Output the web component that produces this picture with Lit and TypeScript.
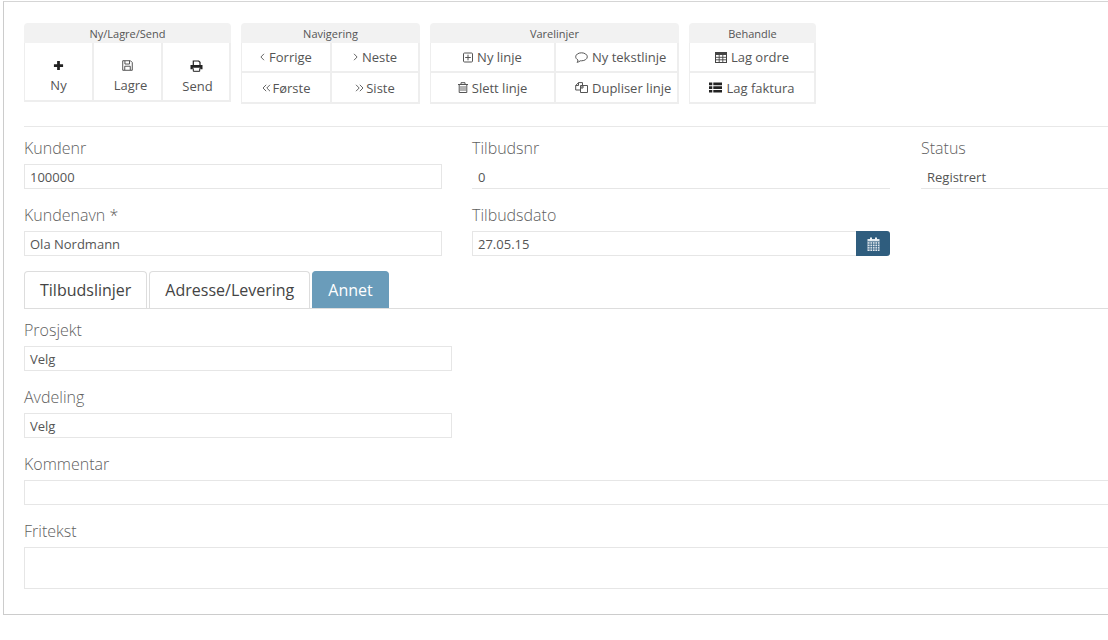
import { LitElement, html, css, svg } from "lit";
import { customElement } from "lit/decorators.js";

const icon = (vb: string, body: unknown, cls = "ic") =>
  html`<svg class=${cls} viewBox=${vb} aria-hidden="true">${body}</svg>`;

const I = {
  plus: icon("0 0 12 12", svg`<path d="M4.500 1h3v3.500H11v3H7.500V11h-3V7.500H1v-3h3.500z" fill="#222"/>`, "big"),
  save: icon("0 0 12 12", svg`<path d="M.8.8h8.400l2 2v8.400H.8z" fill="none" stroke="#444" stroke-width="1"/><path d="M3.200 1v3.400h5V1M3 11V6.800h6V11" fill="none" stroke="#444" stroke-width="1"/>`, "big"),
  print: icon("0 0 13 12", svg`<path d="M3.300 5V1h5.400l1.300 1.300V5" fill="none" stroke="#222" stroke-width="1.200"/><path d="M.5 5h12v4.300h-2.300V7.800H2.800v1.500H.5z" fill="#222"/><path d="M3.300 8.300v3h6.400v-3" fill="none" stroke="#222" stroke-width="1"/>`, "bigw"),
  left: icon("0 0 5 12", svg`<path d="M4 2.800.9 6 4 9.200" fill="none" stroke="#666" stroke-width="1"/>`, "ch"),
  right: icon("0 0 5 12", svg`<path d="M1 2.800 4.100 6 1 9.200" fill="none" stroke="#666" stroke-width="1"/>`, "ch"),
  dleft: icon("0 0 9 12", svg`<path d="M4.200 2.800 1 6l3.200 3.200M8 2.800 4.800 6 8 9.200" fill="none" stroke="#666" stroke-width="1"/>`, "dch"),
  dright: icon("0 0 9 12", svg`<path d="M1 2.800 4.200 6 1 9.200M4.800 2.800 8 6 4.800 9.200" fill="none" stroke="#666" stroke-width="1"/>`, "dch"),
  plusSq: icon("0 0 10 10", svg`<rect x=".5" y=".5" width="9" height="9" rx="1" fill="none" stroke="#555" stroke-width="1"/><path d="M2.200 5h5.600M5 2.200v5.600" stroke="#555" stroke-width="1"/>`, "sq"),
  comment: icon("0 0 13 11", svg`<path d="M6.500.8c3.200 0 5.800 1.800 5.800 4s-2.600 4-5.800 4H5.300c-.9.800-2 1.300-3.300 1.500.6-.7 1-1.400 1-2.300C1.600 7.200.7 6.100.7 4.800c0-2.200 2.600-4 5.800-4z" fill="none" stroke="#555" stroke-width="1"/>`, "wd"),
  trash: icon("0 0 10 11", svg`<path d="M0 2.500h10M3 2.500V.7h4v1.800M1.200 2.500v8h7.600v-8" fill="none" stroke="#555" stroke-width="1"/><path d="M3 4v5M5 4v5M7 4v5" stroke="#555" stroke-width=".9"/>`, "sq"),
  files: icon("0 0 13 11", svg`<path d="M5.500 3.500h7v7h-7zM5.500 6 8 3.500V6z" fill="none" stroke="#555" stroke-width="1"/><path d="M5.500 8H.7V3.500L3.500.6h4v2.900M.7 3.500h2.800V.6" fill="none" stroke="#555" stroke-width="1"/>`, "wd"),
  table: icon("0 0 12 11", svg`<rect x=".5" y=".5" width="11" height="10" fill="none" stroke="#444" stroke-width="1"/><path d="M.5.500h11v2.500H.5z" fill="#444"/><path d="M.5 5.300h11M.5 7.800h11M4.200 3v7.500M7.800 3v7.500" stroke="#444" stroke-width=".9"/>`, "tb"),
  list: icon("0 0 13 11", svg`<path d="M0 .5h3.300v2.700H0zM0 4.200h3.300v2.700H0zM0 7.900h3.300v2.700H0zM4.300.5H13v2.700H4.300zM4.300 4.200H13v2.700H4.300zM4.300 7.900H13v2.700H4.300z" fill="#222"/>`, "wd"),
  cal: icon("0 0 13 14", svg`<path d="M.5 2h12v12H.5z" fill="#dfe7ed"/><path d="M3 .5h2V3.500H3zM8 .5h2V3.500H8z" fill="#eef3f6"/><path d="M.5 4.700h12M.5 7.200h12M.5 9.600h12M.5 12h12M3 5v9M5.500 5v9M8 5v9M10.500 5v9" stroke="#3a6686" stroke-width=".8"/>`, "cal"),
};

@customElement("app-root")
export class AppRoot extends LitElement {
  static styles = css`
    :host { display: block; width: 1108px; height: 640px; overflow: hidden; background: #fff;
      font-family: "Open Sans", "Liberation Sans", sans-serif; color: #555; }
    .panel { margin: 1px 0 0 3px; width: 1200px; height: 614px; box-sizing: border-box;
      border: 1px solid #ccc; border-top: 1px solid #d5d5d5; border-right: 0; padding: 21px 0 0 20px; }
    .toolbar { display: flex; gap: 10px; align-items: flex-start; }
    .group { display: flex; flex-direction: column; }
    .w1 { width: 207px; } .w2 { width: 179px; } .w3 { width: 249px; } .w4 { width: 127px; }
    .head { height: 20px; background: #f2f2f2; border-radius: 4px 4px 0 0; font-size: 11px; line-height: 21px;
      text-align: center; color: #555; }
    .cells { display: grid; border-left: 1px solid #eee; }
    .c1 { grid-template-columns: 69px 69px 68px; }
    .c2 { grid-template-columns: 90px 88px; }
    .c3 { grid-template-columns: 125px 123px; }
    .c4 { grid-template-columns: 126px; }
    .cell { box-sizing: border-box; display: flex; align-items: center; justify-content: center; gap: 4px;
      height: 30px; font-size: 13px; color: #555; border-right: 2px solid #eee; border-bottom: 2px solid #eee; white-space: nowrap; }
    .r2 { height: 31px; }
    .tall { flex-direction: column; justify-content: flex-start; height: 59px; gap: 0; padding-top: 17px; }
    .tall span { line-height: 18px; margin-top: 5px; }
    .o3 span { margin-left: 6px; }
    .o1 span { margin-left: 3px; }
    .lft { justify-content: flex-start; padding-left: 19px; }
    .big { width: 11px; height: 11px; flex: none; }
    .bigw { width: 13px; height: 12px; flex: none; }
    .sq { width: 10px; height: 11px; }
    .wd { width: 13px; height: 11px; }
    .tb { width: 12px; height: 11px; }
    .ch { width: 5px; height: 12px; }
    .dch { width: 9px; height: 12px; margin-right: -2px; }
    .rule { height: 1px; background: #e8e8e8; margin: 22px 0 0; }
    .fields { display: grid; grid-template-columns: 418px 418px 1fr; column-gap: 30px; }
    .fields > div:nth-child(3n) { margin-left: 1px; }
    label { display: block; font-size: 16px; font-weight: 300; line-height: 22px; color: #5f5f5f; height: 22px; }
    .f { padding-top: 10px; }
    .f2 { padding-top: 15px; }
    .input { box-sizing: border-box; height: 25px; border: 1px solid #e6e6e6; font-size: 13px; line-height: 24px;
      padding-left: 5px; color: #555; margin-top: 5px; }
    .plain { border-width: 0 0 1px 0; padding-left: 6px; padding-top: 1px; }
    .dategroup { display: flex; margin-top: 5px; }
    .dategroup .input { flex: 1; margin-top: 0; border-right: 0; }
    .calbtn { width: 34px; height: 25px; background: #2f5d7e; border-radius: 0 3px 3px 0; display: flex; align-items: center; justify-content: center; }
    .cal { width: 13px; height: 14px; }
    .tabs { display: flex; gap: 2px; margin-top: 15px; height: 37px; border-bottom: 1px solid #ddd; }
    .tab { box-sizing: border-box; height: 37px; padding: 0 15px; border: 1px solid #ddd; border-bottom: 0; border-radius: 4px 4px 0 0;
      font-size: 16px; line-height: 36px; color: #444; }
    .tab.on { background: #6a9cba; border-color: #6a9cba; color: #fff; font-weight: 500; }
    .s { width: 428px; }
    .sec { padding-top: 15px; }
    .first { padding-top: 10px; }
    .area { height: 42px; }
    .wide-field { width: 1160px; }
  `;

  private cell(icn: unknown, text: string, extra = "") {
    return html`<div class="cell ${extra}">${icn}<span>${text}</span></div>`;
  }

  render() {
    return html`<div class="panel">
      <div class="toolbar">
        <div class="group w1">
          <div class="head">Ny/Lagre/Send</div>
          <div class="cells c1">
            ${this.cell(I.plus, "Ny", "tall")}${this.cell(I.save, "Lagre", "tall o3")}${this.cell(I.print, "Send", "tall o1")}
          </div>
        </div>
        <div class="group w2">
          <div class="head">Navigering</div>
          <div class="cells c2">
            ${this.cell(I.left, "Forrige")}${this.cell(I.right, "Neste")}
            ${this.cell(I.dleft, "Første", "r2")}${this.cell(I.dright, "Siste", "r2")}
          </div>
        </div>
        <div class="group w3">
          <div class="head">Varelinjer</div>
          <div class="cells c3">
            ${this.cell(I.plusSq, "Ny linje")}${this.cell(I.comment, "Ny tekstlinje", "lft")}
            ${this.cell(I.trash, "Slett linje", "r2")}${this.cell(I.files, "Dupliser linje", "r2 lft")}
          </div>
        </div>
        <div class="group w4">
          <div class="head">Behandle</div>
          <div class="cells c4">
            ${this.cell(I.table, "Lag ordre")}${this.cell(I.list, "Lag faktura", "r2")}
          </div>
        </div>
      </div>
      <div class="rule"></div>
      <div class="fields">
        <div class="f"><label>Kundenr</label><div class="input">100000</div></div>
        <div class="f"><label>Tilbudsnr</label><div class="input plain">0</div></div>
        <div class="f"><label>Status</label><div class="input plain">Registrert</div></div>
        <div class="f2"><label>Kundenavn *</label><div class="input">Ola Nordmann</div></div>
        <div class="f2"><label>Tilbudsdato</label>
          <div class="dategroup"><div class="input">27.05.15</div><div class="calbtn">${I.cal}</div></div>
        </div>
        <div></div>
      </div>
      <div class="tabs">
        <div class="tab">Tilbudslinjer</div>
        <div class="tab">Adresse/Levering</div>
        <div class="tab on">Annet</div>
      </div>
      <div class="sec first s"><label>Prosjekt</label><div class="input">Velg</div></div>
      <div class="sec s"><label>Avdeling</label><div class="input">Velg</div></div>
      <div class="sec wide-field"><label>Kommentar</label><div class="input"></div></div>
      <div class="sec wide-field"><label>Fritekst</label><div class="input area"></div></div>
    </div>`;
  }
}
